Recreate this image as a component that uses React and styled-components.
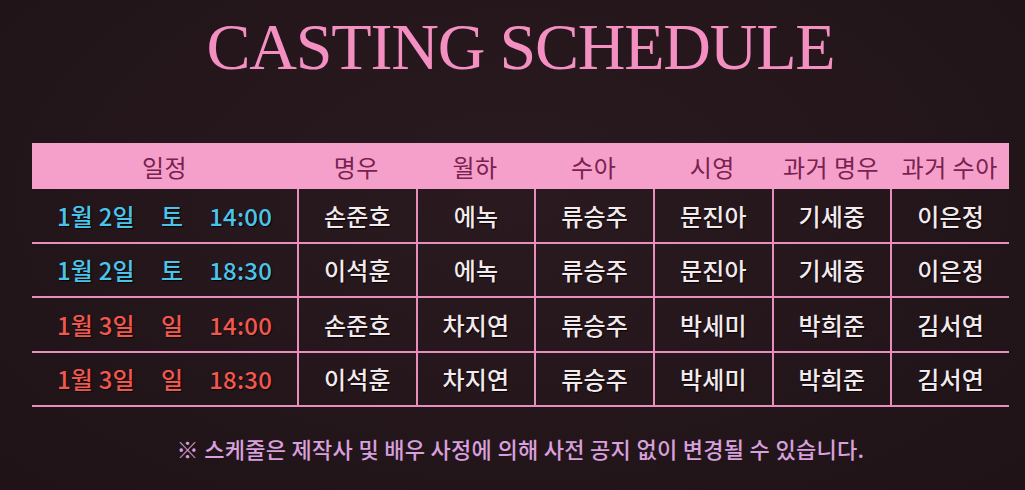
import React from "react";
import styled, { createGlobalStyle } from "styled-components";

const GlobalStyle = createGlobalStyle`
  html, body {
    margin: 0;
    padding: 0;
    background: #24171c;
  }
  body {
    width: 1025px;
    height: 490px;
    overflow: hidden;
    font-family: "Noto Sans CJK KR", "Noto Sans", sans-serif;
  }
`;

const Page = styled.div`
  width: 1025px;
  height: 490px;
  background: radial-gradient(ellipse at 50% 40%, #2a1a20 0%, #22151a 70%, #1f1317 100%);
  display: flex;
  flex-direction: column;
  padding-left: 32px;
  box-sizing: border-box;
`;

const Title = styled.h1`
  margin: 0;
  padding-top: 14px;
  width: 977px;
  text-align: center;
  font-family: "Liberation Serif", serif;
  font-weight: 400;
  font-size: 66px;
  line-height: 66px;
  letter-spacing: -1.2px;
  color: #f48fc2;
`;

const Table = styled.div`
  margin-top: 63px;
  width: 977px;
  display: grid;
  grid-template-columns: 265px repeat(6, 1fr);
`;

const HeaderCell = styled.div`
  height: 46px;
  background: #f4a0ca;
  color: #7a2150;
  font-size: 24px;
  font-weight: 400;
  letter-spacing: 0.5px;
  display: flex;
  align-items: center;
  justify-content: center;
  white-space: nowrap;
`;

const Cell = styled.div`
  height: 54.5px;
  box-sizing: border-box;
  border-bottom: 2px solid #e98dbd;
  border-left: ${(p) => (p.$first ? "none" : "2px solid #e98dbd")};
  display: flex;
  align-items: center;
  justify-content: center;
  gap: 26px;
  font-size: 24px;
  font-weight: 500;
  letter-spacing: 0.2px;
  color: ${(p) => p.$color || "#f3eaee"};
  text-shadow: 1px 1px 1px rgba(0, 0, 0, 0.85);
  white-space: nowrap;
`;

const Footer = styled.p`
  margin: 28px 0 0;
  width: 977px;
  text-align: center;
  font-size: 22px;
  line-height: 26px;
  font-weight: 500;
  letter-spacing: 0.3px;
  color: #d8a0dc;
`;

const headers = ["일정", "명우", "월하", "수아", "시영", "과거 명우", "과거 수아"];

const rows = [
  { date: "1월 2일", day: "토", time: "14:00", color: "#4bc4ec", cast: ["손준호", "에녹", "류승주", "문진아", "기세중", "이은정"] },
  { date: "1월 2일", day: "토", time: "18:30", color: "#4bc4ec", cast: ["이석훈", "에녹", "류승주", "문진아", "기세중", "이은정"] },
  { date: "1월 3일", day: "일", time: "14:00", color: "#f2574f", cast: ["손준호", "차지연", "류승주", "박세미", "박희준", "김서연"] },
  { date: "1월 3일", day: "일", time: "18:30", color: "#f2574f", cast: ["이석훈", "차지연", "류승주", "박세미", "박희준", "김서연"] },
];

export default function App() {
  return (
    <>
      <GlobalStyle />
      <Page>
        <Title>CASTING SCHEDULE</Title>
        <Table>
          {headers.map((h) => (
            <HeaderCell key={h}>{h}</HeaderCell>
          ))}
          {rows.map((r, i) => (
            <React.Fragment key={i}>
              <Cell $first $color={r.color}>
                <span>{r.date}</span>
                <span>{r.day}</span>
                <span>{r.time}</span>
              </Cell>
              {r.cast.map((c, j) => (
                <Cell key={j}>{c}</Cell>
              ))}
            </React.Fragment>
          ))}
        </Table>
        <Footer>※ 스케줄은 제작사 및 배우 사정에 의해 사전 공지 없이 변경될 수 있습니다.</Footer>
      </Page>
    </>
  );
}
